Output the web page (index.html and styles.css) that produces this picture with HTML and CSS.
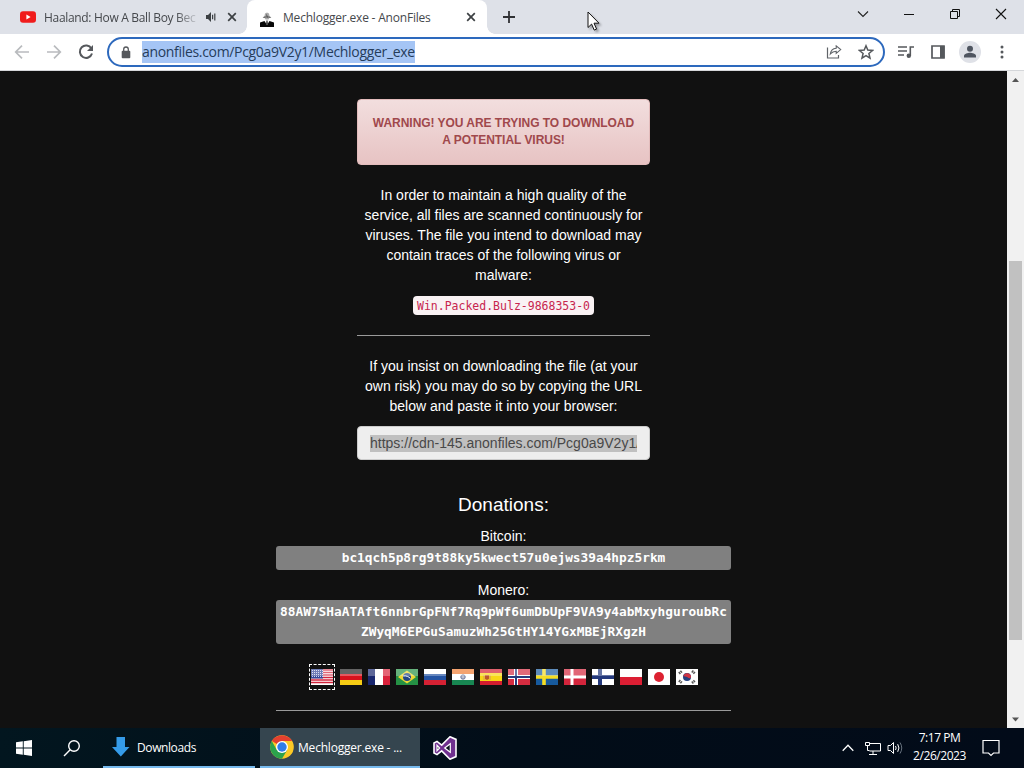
FILE: index.html
```
<!DOCTYPE html>
<html lang="en">
<head>
  <meta charset="UTF-8" />
  <meta name="viewport" content="width=device-width, initial-scale=1.0" />
  <title>Mechlogger.exe - AnonFiles</title>
  <link rel="stylesheet" href="styles.css">
</head>
<body>
  <div class="tab-strip">
    <div class="tab">
      <svg class="favicon" width="16" height="16" viewBox="0 0 16 16"><rect x="0" y="2.3" width="16" height="11.4" rx="3" fill="#f01c1c"/><path d="M6.4 5.6v4.8l4.2-2.4z" fill="#fff"/></svg>
      <span class="tab-title tab-title-fade">Haaland: How A Ball Boy Bec</span>
      <svg class="audio" width="12" height="12" viewBox="0 0 12 12"><path d="M1 4h2l3-3v10l-3-3H1z" fill="#3c4043"/><path d="M7.6 3.8v4.4M9.8 2.5v7" stroke="#3c4043" stroke-width="1.2"/></svg>
      <svg class="close" width="10" height="10" viewBox="0 0 10 10"><path d="M1.2 1.2l7.6 7.6M8.8 1.2L1.2 8.8" stroke="#3c4043" stroke-width="1.7"/></svg>
    </div>
    <div class="tab tab-active">
      <svg class="favicon" width="16" height="16" viewBox="0 0 16 16"><path d="M1 16v-4.500l4.500-1.500L8 14l2.500-4 4.500 1.500V16z" fill="#080808"/><path d="M7.400 9.500h1.200L9 13l-1 1.500L7 13z" fill="#444"/><path d="M6 2.500L8 1.500l2 1 .5 2.500 2 1.500-2 .3L9.500 8.500h-3l-1-1.700-2-.3 2-1.500z" fill="#aaa"/><path d="M4.500 6.500c2-.8 5-.8 7 0M7.500 3.500l1 3" stroke="#555" fill="none"/></svg>
      <span class="tab-title">Mechlogger.exe - AnonFiles</span>
      <svg class="close" width="10" height="10" viewBox="0 0 10 10"><path d="M1.2 1.2l7.6 7.6M8.8 1.2L1.2 8.8" stroke="#3c4043" stroke-width="1.7"/></svg>
    </div>
    <svg class="new-tab" width="12" height="12" viewBox="0 0 12 12"><path d="M6 0v12M0 6h12" stroke="#303134" stroke-width="1.8"/></svg>
    <div class="window-buttons">
      <svg width="12" height="12" viewBox="0 0 12 12"><path d="M1 3.500l5 5 5-5" fill="none" stroke="#222" stroke-width="1.100"/></svg>
      <svg width="12" height="12" viewBox="0 0 12 12"><path d="M1 6.500h10" stroke="#111"/></svg>
      <svg width="12" height="12" viewBox="0 0 12 12"><path d="M1.500 3.500h7v7h-7zM3.500 3.500v-2h7v7h-2" fill="none" stroke="#111"/></svg>
      <svg width="12" height="12" viewBox="0 0 12 12"><path d="M1 1l10 10M11 1L1 11" stroke="#111" stroke-width="1.100"/></svg>
    </div>
  </div>

  <div class="toolbar">
    <div class="nav">
      <svg width="16" height="16" viewBox="0 0 16 16"><path d="M15 8H2M8 1.700L1.700 8 8 14.300" fill="none" stroke="#b9bbbe" stroke-width="1.700"/></svg>
      <svg width="16" height="16" viewBox="0 0 16 16"><path d="M1 8h13M8 1.700L14.300 8 8 14.300" fill="none" stroke="#b9bbbe" stroke-width="1.700"/></svg>
      <svg width="16" height="16" viewBox="0 0 16 16"><path d="M13.400 4.500A6.200 6.200 0 1 0 14 9.500" fill="none" stroke="#55585c" stroke-width="2"/><path d="M15 1v6H9z" fill="#55585c"/></svg>
    </div>
    <div class="omnibox">
      <svg class="lock" width="10" height="13" viewBox="0 0 10 13"><rect x=".7" y="4.700" width="8.600" height="7.500" rx="1" fill="#55585c"/><path d="M2.700 5V3.300a2.300 2.300 0 0 1 4.600 0V5" fill="none" stroke="#55585c" stroke-width="1.300"/></svg>
      <span class="url">anonfiles.com/Pcg0a9V2y1/Mechlogger_exe</span>
      <svg class="share" width="16" height="14" viewBox="0 0 16 14"><path d="M1.500 2.500v10.500h11v-3" fill="none" stroke="#5f6368" stroke-width="1.200"/><path d="M10.200 3.200V.9l4.500 3.700-4.500 3.800V6.200C7.600 6.200 5.800 7.200 4.300 9c.4-3 2.400-5.500 5.900-5.800z" fill="none" stroke="#5f6368" stroke-width="1.100"/></svg>
      <svg width="16" height="16" viewBox="0 0 16 16"><path d="M8 1.800l1.800 4.300 4.700.4-3.600 3 1.100 4.600-4-2.500-4 2.500 1.100-4.600-3.600-3 4.700-.4z" fill="none" stroke="#55585c" stroke-width="1.500"/></svg>
    </div>
    <div class="actions">
      <svg width="16" height="14" viewBox="0 0 16 14"><path d="M0 2h9M0 6h9M0 10h6M12.300 11V2H16" fill="none" stroke="#55585c" stroke-width="1.600"/><circle cx="10.800" cy="10.800" r="2.200" fill="#55585c"/></svg>
      <svg width="14" height="14" viewBox="0 0 14 14"><path d="M1 1h12v12H1z" fill="none" stroke="#55585c" stroke-width="1.700"/><path d="M9 1h4.500v12H9z" fill="#55585c"/></svg>
      <svg width="22" height="22" viewBox="0 0 22 22"><circle cx="11" cy="11" r="11" fill="#dfe1e7"/><circle cx="11" cy="7.800" r="3" fill="#4f5560"/><path d="M5 16.500v-1.700c0-2 4-3 6-3s6 1 6 3v1.700z" fill="#4f5560"/></svg>
      <svg width="4" height="14" viewBox="0 0 4 14"><circle cx="2" cy="2" r="1.500" fill="#55585c"/><circle cx="2" cy="7" r="1.500" fill="#55585c"/><circle cx="2" cy="12" r="1.500" fill="#55585c"/></svg>
    </div>
  </div>

  <div class="viewport">
    <main class="page">
      <div class="download">
        <div class="alert">WARNING! YOU ARE TRYING TO DOWNLOAD<br>A POTENTIAL VIRUS!</div>
        <p>In order to maintain a high quality of the<br>service, all files are scanned continuously for<br>viruses. The file you intend to download may<br>contain traces of the following virus or<br>malware:</p>
        <p><code class="virus">Win.Packed.Bulz-9868353-0</code></p>
        <hr>
        <p>If you insist on downloading the file (at your<br>own risk) you may do so by copying the URL<br>below and paste it into your browser:</p>
        <div class="url-field"><span>https://cdn-145.anonfiles.com/Pcg0a9V2y1/</span></div>
      </div>

      <div class="donations">
        <h4>Donations:</h4>
        <div>Bitcoin:</div>
        <code class="wallet">bc1qch5p8rg9t88ky5kwect57u0ejws39a4hpz5rkm</code>
        <div>Monero:</div>
        <code class="wallet">88AW7SHaATAft6nnbrGpFNf7Rq9pWf6umDbUpF9VA9y4abMxyhguroubRc<br>ZWyqM6EPGuSamuzWh25GtHY14YGxMBEjRXgzH</code>
      </div>

      <div class="flags">
        <span class="flag-selected"><svg class="flag" viewBox="0 0 22 16"><path fill="#fff" d="M0 0h22v16H0z"/><path d="M0 1h22M0 3.500h22M0 6h22M0 8.500h22M0 11h22M0 13.500h22" stroke="#d2243c" stroke-width="1.300"/><path fill="#35479a" d="M0 0h12v9.500H0z"/><path d="M1 1.500h11M1 3.500h11M1 5.500h11M1 7.500h11" stroke="#cdd3ea" stroke-dasharray="1 1"/><path class="gloss" d="M0 0h22v7H0z"/></svg></span>
        <svg class="flag" viewBox="0 0 22 16"><path fill="#222" d="M0 0h22v6H0z"/><path fill="#d8121c" d="M0 5h22v6H0z"/><path fill="#f6cc14" d="M0 11h22v5H0z"/><path class="gloss" d="M0 0h22v7H0z"/></svg>
        <svg class="flag" viewBox="0 0 22 16"><path fill="#fff" d="M0 0h22v16H0z"/><path fill="#18266e" d="M0 0h7v16H0z"/><path fill="#d9213b" d="M15 0h7v16h-7z"/><path class="gloss" d="M0 0h22v7H0z"/></svg>
        <svg class="flag" viewBox="0 0 22 16"><path fill="#259144" d="M0 0h22v16H0z"/><path fill="#efd932" d="M11 1.500L20 8l-9 6.500L2 8z"/><circle cx="11" cy="8" r="4" fill="#234685"/><path d="M7.200 7c3-.5 5.500.5 7.200 2.500" stroke="#fff" fill="none"/><path class="gloss" d="M0 0h22v7H0z"/></svg>
        <svg class="flag" viewBox="0 0 22 16"><path fill="#fff" d="M0 0h22v6H0z"/><path fill="#2454a3" d="M0 5h22v6H0z"/><path fill="#d52133" d="M0 11h22v5H0z"/><path class="gloss" d="M0 0h22v7H0z"/></svg>
        <svg class="flag" viewBox="0 0 22 16"><path fill="#fff" d="M0 0h22v16H0z"/><path fill="#ef7c32" d="M0 0h22v5H0z"/><path fill="#188752" d="M0 11h22v5H0z"/><circle cx="11" cy="8" r="2.200" fill="#bcc0cf" stroke="#68729a"/><path class="gloss" d="M0 0h22v7H0z"/></svg>
        <svg class="flag" viewBox="0 0 22 16"><path fill="#d31d2f" d="M0 0h22v16H0z"/><path fill="#f7d616" d="M0 4h22v8H0z"/><path fill="#bc592d" d="M5 6h4v4l-2 1-2-1z"/><path d="M4 6v5M10 6v5" stroke="#d49a56"/><path class="gloss" d="M0 0h22v7H0z"/></svg>
        <svg class="flag" viewBox="0 0 22 16"><path fill="#d52c40" d="M0 0h22v16H0z"/><path d="M8 0v16M0 8h22" stroke="#fff" stroke-width="4"/><path d="M8 0v16M0 8h22" stroke="#273b7c" stroke-width="2"/><path class="gloss" d="M0 0h22v7H0z"/></svg>
        <svg class="flag" viewBox="0 0 22 16"><path fill="#175a9d" d="M0 0h22v16H0z"/><path d="M8 0v16M0 8h22" stroke="#f5dd22" stroke-width="3.600"/><path class="gloss" d="M0 0h22v7H0z"/></svg>
        <svg class="flag" viewBox="0 0 22 16"><path fill="#d4253c" d="M0 0h22v16H0z"/><path d="M8 0v16M0 8h22" stroke="#fff" stroke-width="3"/><path class="gloss" d="M0 0h22v7H0z"/></svg>
        <svg class="flag" viewBox="0 0 22 16"><path fill="#fff" d="M0 0h22v16H0z"/><path d="M8 0v16M0 8h22" stroke="#23387c" stroke-width="4"/><path class="gloss" d="M0 0h22v7H0z"/></svg>
        <svg class="flag" viewBox="0 0 22 16"><path fill="#fff" d="M0 0h22v8H0z"/><path fill="#dc1e33" d="M0 8h22v8H0z"/></svg>
        <svg class="flag" viewBox="0 0 22 16"><path fill="#fff" d="M0 0h22v16H0z"/><circle cx="11" cy="8" r="5" fill="#dc2131"/></svg>
        <svg class="flag" viewBox="0 0 22 16"><path fill="#fff" d="M0 0h22v16H0z"/><circle cx="11" cy="8" r="4" fill="#24407f"/><path fill="#cf3444" d="M7.200 7A4 4 0 0 1 15 8.500c-2 1.700-3-.2-4-.5S8 7.500 7.200 7z"/><path d="M3 4.500l3-2.500M16 2l3 2.500M3 11.500L6 14M16 14l3-2.500" stroke="#555" stroke-width="2.500" stroke-dasharray="1.500 .6"/></svg>
      </div>
      <hr class="footer-line">
    </main>
    <div class="scrollbar">
      <svg width="17" height="17" viewBox="0 0 17 17"><path d="M5 11l3.500-4 3.500 4z" fill="#555"/></svg>
      <div class="thumb"></div>
      <svg width="17" height="17" viewBox="0 0 17 17"><path d="M5 6.500l3.500 4 3.500-4z" fill="#555"/></svg>
    </div>
  </div>

  <div class="taskbar">
    <div class="task-icon"><svg width="16" height="16" viewBox="0 0 16 16"><path d="M0 2.300L6.800 1.300v6.200H0zM7.700 1.200L16 0v7.500H7.700zM0 8.500h6.800v6.200L0 13.700zM7.700 8.500H16V16l-8.300-1.200z" fill="#fff"/></svg></div>
    <div class="task-icon"><svg width="18" height="18" viewBox="0 0 18 18"><circle cx="11" cy="7" r="5.300" fill="none" stroke="#fff" stroke-width="1.400"/><path d="M7.200 10.800L1 17" stroke="#fff" stroke-width="1.400"/></svg></div>
    <div class="task downloads">
      <svg width="18" height="20" viewBox="0 0 18 20"><path d="M4.500 0h8.500v10h4.500L8.800 19.500 0 10h4.500z" fill="#359be8"/></svg>
      <span>Downloads</span>
    </div>
    <div class="task task-current">
      <svg width="24" height="24" viewBox="0 0 24 24"><circle cx="12" cy="12" r="11.800" fill="#fbc926"/><path d="M12 12L1.800 6A11.800 11.800 0 0 1 22.200 6H12z" fill="#e3402f"/><path d="M12 12l5.200 3-5.200 8.800A11.800 11.800 0 0 1 1.800 6l5 9z" fill="#2ba24c"/><circle cx="12" cy="12" r="6" fill="#fff"/><circle cx="12" cy="12" r="4.700" fill="#2f7de9"/></svg>
      <span>Mechlogger.exe - ...</span>
    </div>
    <div class="task-vs"><svg width="24" height="24" viewBox="0 0 24 24"><path d="M17 .8l6 2.600v17.200l-6 2.600-8.300-8.300L4 18.600 1 17V7l3-1.600 4.700 3.700z" fill="#70308f" stroke="#fff" stroke-width="1.600"/><path d="M17.300 7.700v8.600L11.700 12zM4 9.300v5.400L6.600 12z" fill="#0c1420" stroke="#fff" stroke-width="1.200"/></svg></div>
    <div class="tray">
      <svg width="12" height="8" viewBox="0 0 12 8"><path d="M.7 6.700L6 1.300l5.300 5.400" fill="none" stroke="#fff" stroke-width="1.300"/></svg>
      <svg class="network" width="17" height="14" viewBox="0 0 17 14"><path d="M6 2.500h10.500v7.500H5.500M5 13.500h8M9 10v3.500M3.500 5v4.500h2" fill="none" stroke="#fff"/><path d="M1.500 1.500h4v3h-4z" fill="none" stroke="#fff"/></svg>
      <svg class="sound" width="17" height="14" viewBox="0 0 17 14"><path d="M1 4.500h2.500l3-3v11l-3-3H1z" fill="none" stroke="#fff"/><path d="M8.500 5q1.300 2 0 4M10.700 3.200q2.500 3.800 0 7.600" fill="none" stroke="#fff"/><path d="M13 1.500q3.500 5.500 0 11" fill="none" stroke="#67727e"/></svg>
      <div class="clock">7:17 PM<br>2/26/2023</div>
      <svg width="18" height="18" viewBox="0 0 18 18"><path d="M1 1.500h16V14h-5.500L9 16.500 6.500 14H1z" fill="none" stroke="#fff" stroke-width="1.200"/></svg>
    </div>
  </div>

  <svg class="cursor" width="14" height="21" viewBox="0 0 14 21"><path d="M1 1v15.500l3.600-3.400 2.600 6 2.400-1-2.600-5.900h5z" fill="#fff" stroke="#111"/></svg>
</body>
</html>
```

FILE: styles.css
```
* {
  box-sizing: border-box;
}

body {
  margin: 0;
  width: 1024px;
  height: 768px;
  overflow: hidden;
  display: flex;
  flex-direction: column;
  background-color: #111111;
  font-family: 'Open Sans', 'Segoe UI', sans-serif;
}

svg {
  flex: none;
  display: block;
}

/* browser tabs */
.tab-strip {
  height: 34px;
  flex: none;
  display: flex;
  align-items: center;
  background-color: #dee1e8;
}

.tab {
  width: 247px;
  height: 34px;
  display: flex;
  align-items: center;
  padding-left: 20px;
  color: #45484c;
  font-size: 12px;
}

.tab-active {
  position: relative;
  width: 240px;
  padding-left: 12px;
  background-color: #fff;
  border-radius: 8px 8px 0 0;
}

.tab-active::before,
.tab-active::after {
  content: '';
  position: absolute;
  bottom: 0;
  width: 8px;
  height: 8px;
}

.tab-active::before {
  left: -8px;
  background: radial-gradient(circle at 0 0, transparent 7.5px, #fff 8px);
}

.tab-active::after {
  right: -8px;
  background: radial-gradient(circle at 100% 0, transparent 7.5px, #fff 8px);
}

.tab-title {
  margin-left: 8px;
  width: 176px;
  white-space: nowrap;
  letter-spacing: -0.2px;
}

.tab-active .favicon {
  margin-top: 3px;
}

.tab-active .close {
  margin-left: 7px;
}

.tab-title-fade {
  width: 153px;
  letter-spacing: -0.32px;
  -webkit-mask-image: linear-gradient(to right, #000 132px, transparent 156px);
  mask-image: linear-gradient(to right, #000 132px, transparent 156px);
}

.audio {
  margin-left: 8px;
}

.tab > .audio + .close {
  margin-left: 10px;
}

.new-tab {
  margin-left: 16px;
}

.window-buttons {
  display: flex;
  gap: 34px;
  margin-left: auto;
  margin-right: 17px;
  margin-top: -6px;
}

/* address bar */
.toolbar {
  height: 37px;
  flex: none;
  display: flex;
  align-items: center;
  background-color: #fff;
  border-bottom: 1px solid #d5d7da;
}

.nav {
  display: flex;
  gap: 16px;
  margin-left: 14px;
}

.omnibox {
  width: 778px;
  height: 30px;
  margin-left: 13px;
  display: flex;
  align-items: center;
  border: 2px solid #2d69bd;
  border-radius: 15px;
}

.lock {
  margin-left: 12px;
}

.url {
  margin-left: 11px;
  height: 22px;
  line-height: 22px;
  background-color: #a5c5f5;
  color: #263d5b;
  font-size: 14px;
  letter-spacing: -0.32px;
}

.share {
  margin-left: auto;
  margin-right: 16px;
}

.omnibox svg:last-child {
  margin-right: 9px;
}

.actions {
  display: flex;
  align-items: center;
  margin-left: auto;
  margin-right: 20px;
  gap: 18px;
}

.actions svg:nth-child(2) {
  margin-right: -4px;
  margin-left: -1px;
}

.actions svg:nth-child(3) {
  margin-right: 1px;
}

/* page */
.viewport {
  flex: 1;
  min-height: 0;
  display: flex;
  background-color: #111111;
}

.page {
  width: 1007px;
  padding-top: 28px;
  overflow: hidden;
  display: flex;
  flex-direction: column;
  align-items: center;
  color: #fff;
  font-family: 'Liberation Sans', Arial, sans-serif;
  font-size: 14px;
  line-height: 20px;
  text-align: center;
}

.download {
  width: 293px;
}

.alert {
  height: 66px;
  padding: 15px 0 0;
  margin-bottom: 20px;
  border: 1px solid #e3bcbc;
  border-radius: 4px;
  background-image: linear-gradient(to bottom, #f2dede, #e7c3c3);
  color: #a0484c;
  font-size: 12px;
  font-weight: bold;
  line-height: 17px;
  letter-spacing: -0.04px;
}

.page p {
  margin: 0 0 10px;
  white-space: nowrap;
}

.virus {
  display: block;
  width: 181px;
  height: 19px;
  margin: 11px auto 0;
  border-radius: 4px;
  background-color: #f9f2f4;
  color: #c7254e;
  font-family: 'DejaVu Sans Mono', monospace;
  font-size: 11.5px;
  line-height: 20px;
}

.page hr {
  height: 1px;
  margin: 20px 0;
  border: 0;
  background-color: #9a9a9a;
}

.url-field {
  height: 34px;
  padding: 6px 12px;
  border: 1px solid #ccc;
  border-radius: 4px;
  background-color: #eee;
  color: #555;
  text-align: left;
}

.url-field span {
  display: block;
  width: 267px;
  height: 17px;
  margin-top: 2px;
  line-height: 17px;
  white-space: nowrap;
  overflow: hidden;
  background-color: #c0c0c0;
  color: #484848;
}

.donations {
  width: 455px;
}

.donations h4 {
  margin: 34px 0 11px;
  font-size: 19px;
  font-weight: normal;
  line-height: 21px;
}

.wallet {
  display: block;
  padding: 2px 0;
  margin-bottom: 10px;
  border-radius: 3px;
  background-color: #808080;
  font-family: 'DejaVu Sans Mono', monospace;
  font-size: 12.8px;
  font-weight: bold;
  line-height: 20px;
  white-space: nowrap;
}

.flags {
  display: flex;
  align-items: center;
  gap: 6px;
  margin-top: 10px;
  margin-left: -1px;
}

.flag {
  width: 22px;
  height: 16px;
  background-color: #fff;
}

.gloss {
  fill: rgba(255, 255, 255, 0.3);
}

.flag-selected {
  width: 26px;
  height: 26px;
  padding: 4px 1px;
  margin-right: -1px;
  border: 1px dashed #fff;
}

.page .footer-line {
  width: 455px;
  flex: none;
}

.scrollbar {
  width: 17px;
  display: flex;
  flex-direction: column;
  background-color: #f1f1f1;
}

.thumb {
  width: 13px;
  height: 379px;
  margin: 173px auto auto 2px;
  background-color: #c1c1c1;
}

/* windows taskbar */
.taskbar {
  height: 40px;
  flex: none;
  display: flex;
  align-items: center;
  background: linear-gradient(to right, #02161f, #020d18 50%, #020b19);
  color: #fff;
  font-size: 12px;
}

.task-icon {
  width: 48px;
  display: flex;
  justify-content: center;
}

.task {
  height: 40px;
  display: flex;
  align-items: center;
  border-bottom: 2px solid #76b9ed;
  letter-spacing: -0.2px;
  white-space: nowrap;
}

.downloads {
  width: 152px;
  margin-left: 7px;
  padding-left: 9px;
  gap: 7px;
  letter-spacing: -0.4px;
}

.task-current {
  width: 160px;
  margin-left: 5px;
  padding-left: 10px;
  gap: 4px;
  background-color: #35454f;
}

.task-vs {
  margin-left: 13px;
}

.tray {
  display: flex;
  align-items: center;
  margin-left: auto;
  margin-right: 24px;
}

.network {
  margin-left: 10px;
}

.sound {
  margin-left: 6px;
}

.clock {
  width: 69px;
  margin: 0 8px 0 1px;
  padding-bottom: 2px;
  line-height: 18px;
  letter-spacing: -0.45px;
  text-align: center;
}

.cursor {
  position: absolute;
  left: 587px;
  top: 11px;
  filter: drop-shadow(2px 2px 1px rgba(0, 0, 0, 0.3));
}
```
